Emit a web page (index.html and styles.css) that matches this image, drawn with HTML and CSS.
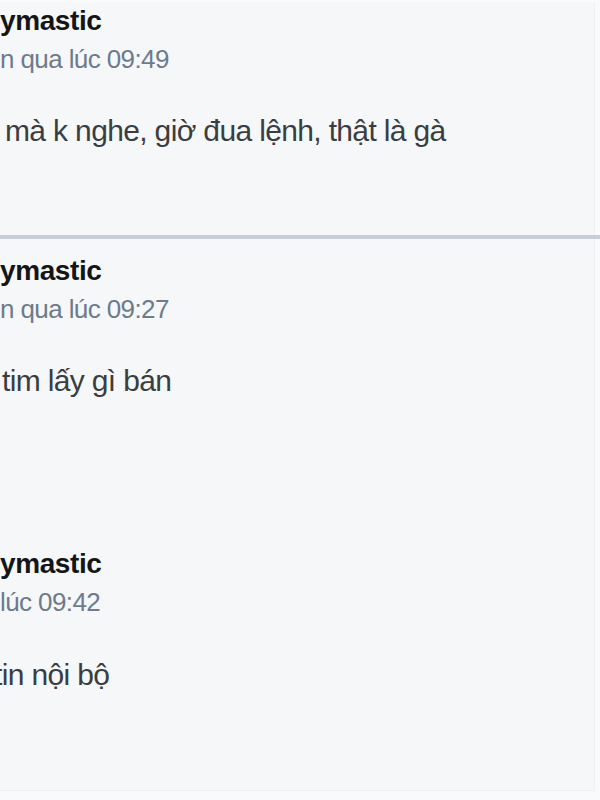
FILE: index.html
```html
<!DOCTYPE html>
<html lang="vi">
<head>
<meta charset="utf-8">
<title>Bình luận</title>
<link rel="stylesheet" href="styles.css">
</head>
<body>
<div class="feed">
  <article class="post post-first">
    <div class="name">ymastic</div>
    <div class="time">n qua lúc 09:49</div>
    <p class="body">mà k nghe, giờ đua lệnh, thật là gà</p>
  </article>
  <article class="post post-second">
    <div class="name">ymastic</div>
    <div class="time">n qua lúc 09:27</div>
    <p class="body body-tight">tim lấy gì bán</p>
  </article>
  <article class="post post-third">
    <div class="name">ymastic</div>
    <div class="time">lúc 09:42</div>
    <p class="body body-cut">tin nội bộ</p>
  </article>
</div>
</body>
</html>
```

FILE: styles.css
```css
html, body {
  margin: 0;
  padding: 0;
  background: #f9fafb;
}
body {
  width: 600px;
  height: 800px;
  overflow: hidden;
  font-family: "Liberation Sans", Arial, sans-serif;
}
.feed {
  width: 594px;
  height: 788px;
  margin-top: 2px;
  background: #f5f7f9;
  border-right: 1px solid #eef1f4;
  border-bottom: 1px solid #eef1f4;
}
.post {
  display: flex;
  flex-direction: column;
}
.post-first {
  padding: 2px 0 86px;
  border-bottom: 4px solid #c6ceda;
  margin-right: -6px;
}
.post-second {
  padding: 15px 0 86px;
}
.post-third {
  padding: 62px 0 0;
}
.name {
  font-size: 28px;
  line-height: 34px;
  letter-spacing: -0.4px;
  font-weight: bold;
  color: #151515;
}
.time {
  margin-top: 6px;
  font-size: 26px;
  line-height: 30px;
  letter-spacing: -0.6px;
  color: #6d7b8c;
}
.body {
  margin: 39px 0 0;
  padding-left: 5px;
  font-size: 30px;
  line-height: 36px;
  letter-spacing: -0.65px;
  color: #3b3d40;
}
.body-tight {
  padding-left: 2px;
}
.body-cut {
  padding-left: 0;
  text-indent: -6px;
  margin-top: 40px;
}
```
